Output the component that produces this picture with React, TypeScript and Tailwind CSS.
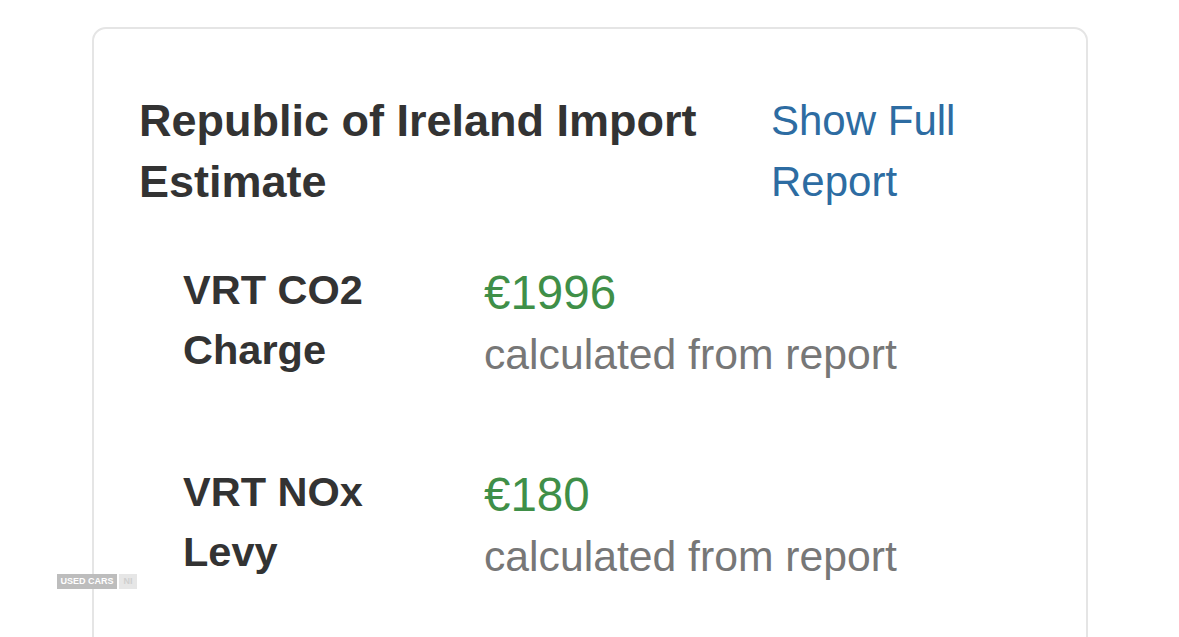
import React from "react";

const rows = [
  { label: ["VRT CO2", "Charge"], value: "€1996" },
  { label: ["VRT NOx", "Levy"], value: "€180" },
];

export default function App() {
  return (
    <div
      className="relative w-[1179px] h-[637px] overflow-hidden bg-white"
      style={{ fontFamily: '"Liberation Sans", Arial, sans-serif' }}
    >
      <div className="ml-[92px] mt-[27px] w-[996px] h-[700px] border-2 border-[#e5e5e5] rounded-[14px] pt-[61px] pl-[45px]">
        <div className="flex">
          <h2 className="w-[632px] text-[45px] leading-[61px] font-bold text-[#333333]">
            Republic of Ireland Import Estimate
          </h2>
          <a className="w-[200px] text-[42px] leading-[61px] text-[#2d6ca2]">
            Show Full Report
          </a>
        </div>
        <div className="mt-[48px] pl-[44px] flex flex-col gap-[77px]">
          {rows.map((r) => (
            <div key={r.value} className="flex">
              <div className="w-[301px] text-[41.5px] leading-[60px] font-bold text-[#333333]">
                {r.label[0]}
                <br />
                {r.label[1]}
              </div>
              <div className="pt-[3px]">
                <div className="text-[47.5px] leading-[60px] text-[#3f8f48]">{r.value}</div>
                <div className="text-[42.7px] leading-[62px] text-[#777777] whitespace-nowrap">calculated from report</div>
              </div>
            </div>
          ))}
        </div>
      </div>
      <div className="absolute left-[57px] top-[574px] flex gap-[2px] text-[9px] leading-[15px] font-bold whitespace-nowrap">
        <span className="bg-[#bdbdbd] text-white w-[60px] text-center">USED CARS</span>
        <span className="bg-[#e6e6e6] text-[#cfcfcf] w-[18px] text-center">NI</span>
      </div>
    </div>
  );
}
